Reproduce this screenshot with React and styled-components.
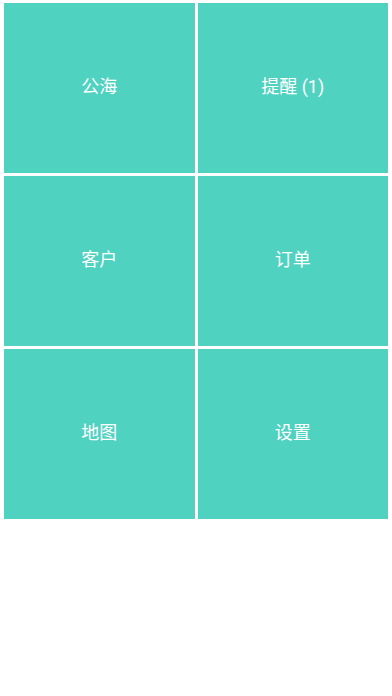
import React from "react";
import styled, { createGlobalStyle } from "styled-components";

const GlobalStyle = createGlobalStyle`
	html, body {
		margin: 0;
		padding: 0;
		background: #ffffff;
	}
	body {
		font-family: Roboto, "Noto Sans CJK SC", sans-serif;
	}
`;

const Page = styled.div`
	width: 392px;
	height: 696px;
	background: #ffffff;
`;

const Grid = styled.div`
	display: grid;
	grid-template-columns: 1fr 1fr;
	grid-auto-rows: 170px;
	gap: 3px;
	padding: 3px 4px;
`;

const Tile = styled.div`
	display: flex;
	align-items: center;
	justify-content: center;
	padding-bottom: 6px;
	box-sizing: border-box;
	background: #50d2c1;
	color: #ffffff;
	font-size: 18px;
	user-select: none;
`;

const items = ["公海", "提醒 (1)", "客户", "订单", "地图", "设置"];

function App() {
	return (
		<Page>
			<GlobalStyle />
			<Grid>
				{items.map((label) => (
					<Tile key={label}>{label}</Tile>
				))}
			</Grid>
		</Page>
	);
}

export default App;
